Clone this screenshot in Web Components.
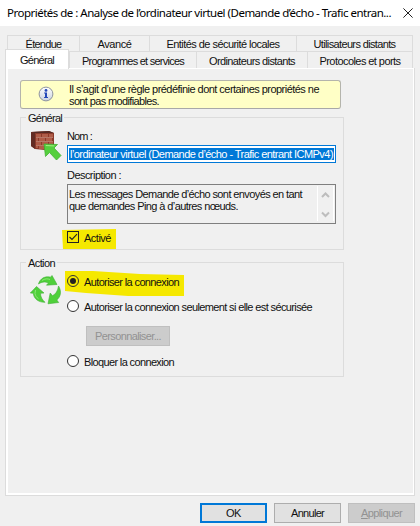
<!DOCTYPE html>
<html lang="fr">
<head>
<meta charset="utf-8">
<title>Propriétés</title>
<style>
html,body{margin:0;height:100%;overflow:hidden;background:#f0f0f0}
</style>
</head>
<body>
<rule-dialog></rule-dialog>

<template id="t-dialog">
<style>
:host{display:flex;flex-direction:column;width:420px;height:526px;background:#f0f0f0;color:#111;font:11px/12px "Liberation Sans",Arial,sans-serif}
header{display:flex;align-items:center;justify-content:space-between;height:26px;box-sizing:border-box;background:#fff;padding:0 7px 1px 7px;color:#000;font:11.5px/16px "Noto Sans","Open Sans",sans-serif}
header svg{display:block}
.tabs{margin:9px 7px 0 7px;display:grid;grid-template-rows:16px 17px;height:33px;width:406px}
.row{display:flex}
.page{box-sizing:border-box;margin-left:5px;width:410px;height:428px;border:1px solid #dcdcdc;border-top:0;display:flex}
.inner{flex:1;border:2px solid #fff;border-width:1px 1px 2px 2px;padding:11px 0 0 12px;display:flex;flex-direction:column;width:0}
.note{box-sizing:border-box;width:321px;height:29px;border:1px solid #b4b4ac;border-bottom-color:#a8a8a8;border-radius:3px;background:#ffffc6;display:flex;padding:2px 0 0 17px;gap:15px}
.note svg{margin-top:3px}
.g1{margin-top:8px;height:133px}
.g2{margin-top:12px;height:115px}
.cols{display:flex}
.c1{width:46px;box-sizing:border-box}
.c1 svg{display:block}
.c2{display:flex;flex-direction:column;align-items:flex-start}
.field{box-sizing:border-box;width:269px;height:18px;border:1px solid #0078d7;background:#fff;padding:2px 1px;margin-top:3px;display:flex}
.sel{background:#0078d7;color:#fff;height:12px;width:265px;padding-left:1px;box-sizing:border-box}
.area{box-sizing:border-box;width:269px;height:40px;border:1px solid #7f7f7f;margin-top:3px;display:flex;justify-content:space-between;padding:3px 1px 0 1px}
.sb{width:15px;height:35px;margin-top:-2px;border-left:1px solid #fff;border-right:1px solid #fff}
footer{display:flex;gap:7px;margin:7px 0 0 200px}
.mark{position:relative;z-index:0}
.mark>svg{position:absolute;z-index:-1;left:-5px;top:-3px}
</style>
<header>
  <ui-text w="384">Propriétés de : Analyse de l’ordinateur virtuel (Demande d’écho - Trafic entran...</ui-text>
  <svg width="10" height="10" viewBox="0 0 10 10"><path d="M.4.4 9.6 9.6M9.6.4.4 9.6" stroke="#222" stroke-width="1" fill="none"/></svg>
</header>
<div class="tabs">
  <div class="row">
    <ui-tab style="width:72px" w="36">Étendue</ui-tab><ui-tab style="width:70px" w="34">Avancé</ui-tab><ui-tab style="width:147px" w="113">Entités de sécurité locales</ui-tab><ui-tab style="width:117px" w="82" last>Utilisateurs distants</ui-tab>
  </div>
  <div class="row">
    <ui-tab active style="width:64px" w="34">Général</ui-tab><ui-tab style="width:127px" w="102">Programmes et services</ui-tab><ui-tab style="width:111px" w="86">Ordinateurs distants</ui-tab><ui-tab style="width:106px" w="81" last>Protocoles et ports</ui-tab>
  </div>
</div>
<div class="page"><div class="inner">
  <div class="note">
    <svg width="16" height="16" viewBox="0 0 16 16"><defs><linearGradient id="b" x2="0" y2="1"><stop stop-color="#fff"/><stop offset="1" stop-color="#c9d1df"/></linearGradient></defs><circle cx="8" cy="8" r="6.9" fill="url(#b)" stroke="#8f949e"/><circle cx="8" cy="4.4" r="1.4" fill="#2347b8"/><path d="M6.1 6.6H9v4.5h1v1H6.1v-1H7V7.600h-.9z" fill="#2347b8"/></svg>
    <div><ui-text w="250">Il s’agit d’une règle prédéfinie dont certaines propriétés ne</ui-text><ui-text w="90">sont pas modifiables.</ui-text></div>
  </div>
  <ui-group class="g1" label="Général" w="34">
    <div class="cols">
      <div class="c1" style="padding:13px 0 0 9px">
        <svg width="32" height="30" viewBox="0 0 32 30"><path d="M1 1 19 0l5 2v18L5 18 1 15z" fill="#8b3a2b"/><path d="M1 1 19 0l5 2H5z" fill="#542a24"/><path d="M1 1l4 1v16l-4-3z" fill="#632c24"/><g fill="#b05c48"><path d="M6 3h5v3H6zM12 3h6v3h-6zM19 3h4v3h-4zM6 7h2v3H6zM9 7h6v3H9zM16 7h6v3h-6zM6 11h5v3H6zM12 11h6v3h-6zM6 15h2v2H6zM9 15h5v3H9zM19 11h4v3h-4z"/></g><path d="M6 6.500h17M6 10.500h17M6 14.500h12" stroke="#d5a392" stroke-width=".6"/><path d="M14 13 27.500 13.500l-3.500 3.500 7 7.500-4.500 4.500-7-7.500-4 4z" fill="#55cf3d" stroke="#43b034" stroke-width=".8"/><path d="M15.800 14.500l8.500.4" stroke="#a3ee83" stroke-width="1" fill="none"/></svg>
      </div>
      <div class="c2" style="padding-top:12px">
        <ui-text w="25">Nom :</ui-text>
        <div class="field"><div class="sel"><ui-text w="263">l’ordinateur virtuel (Demande d’écho - Trafic entrant ICMPv4)</ui-text></div></div>
        <ui-text w="54" style="margin-top:6px">Description :</ui-text>
        <div class="area"><div><ui-text w="233">Les messages Demande d’écho sont envoyés en tant</ui-text><ui-text w="169">que demandes Ping à d’autres nœuds.</ui-text></div>
          <div class="sb"><svg width="15" height="35" viewBox="0 0 15 35"><path d="M4 11l3.500-3.500L11 11M4 26.500l3.500 3.500 3.500-3.500" fill="none" stroke="#bdbdbd" stroke-width="2"/></svg></div></div>
        <div class="mark" style="margin-top:7px">
          <svg width="56" height="22" style="top:-2px"><path d="M0 1 54 0v20H1z" fill="#f5e800"/></svg>
          <ui-choice type="check" w="27">Activé</ui-choice>
        </div>
      </div>
    </div>
  </ui-group>
  <ui-group class="g2" label="Action" w="27">
    <div class="cols">
      <div class="c1" style="padding:12px 0 0 9px">
        <svg width="32" height="30" viewBox="0 0 32 30"><g fill="#4fd03a" stroke="#3fae35" stroke-width=".6"><path d="M8.500 9C10 3.500 15 .8 20.500 2.200L22 .500l5 9-10.500.7 2-2.200C15 6.300 11.500 7 8.500 9z"/><path d="M6.500 11.500l7.500 6.500-3.500.3c0 3.500 1.700 6.500 4.500 9C8.500 27.500 3.500 23.500 3.400 18.300L.3 18z"/><path d="M28.500 11c3.500 5.500 2 11-1.700 14l1.900 2.500-10.700 1.300 2.200-10.800 2.300 2.700c3.200-1.400 5.400-5 6-9.700z"/></g><path d="M12 5.500c3-2 5.500-2 8-1M5.500 15l-.5 3.500c.6 2.500 1.500 4 3.500 5.300" fill="none" stroke="#93e87c" stroke-width=".9"/></svg>
      </div>
      <div class="c2" style="padding-top:12px">
        <div class="mark">
          <svg width="124" height="28" style="top:-4px"><path d="M3 0 31 0 78 3 122 4v21H66L24 22 3 20z" fill="#f5e800"/></svg>
          <ui-choice type="radio" checked w="95">Autoriser la connexion</ui-choice>
        </div>
        <ui-choice type="radio" w="228" style="margin-top:12px">Autoriser la connexion seulement si elle est sécurisée</ui-choice>
        <ui-button disabled w="66" style="width:84px;margin:13px 0 0 19px">Personnaliser...</ui-button>
        <ui-choice type="radio" w="90" style="margin-top:9px">Bloquer la connexion</ui-choice>
      </div>
    </div>
  </ui-group>
</div></div>
<footer><ui-button primary w="15">OK</ui-button><ui-button w="33">Annuler</ui-button><ui-button disabled key w="41">Appliquer</ui-button></footer>
</template>

<script>
const shadow=(el,html)=>{const r=el.attachShadow({mode:'open'});r.innerHTML=html;return r;};

customElements.define('rule-dialog',class extends HTMLElement{
  constructor(){super();this.attachShadow({mode:'open'}).append(document.getElementById('t-dialog').content.cloneNode(true));}
});
customElements.define('ui-tab',class extends HTMLElement{
  connectedCallback(){shadow(this,`<style>
  :host{display:flex;justify-content:center;align-items:center;box-sizing:border-box;flex:none;border:1px solid #dcdcdc;border-width:1px 0 0 1px;height:100%;padding-top:1px}
  :host([last]){border-right-width:1px}
  :host([active]){background:#fff;margin:-2px 0 0 -2px;height:20px;border-right-width:1px;z-index:1;padding-bottom:1px}
  </style><ui-text w="${this.getAttribute('w')}"><slot></slot></ui-text>`);}
});
customElements.define('ui-group',class extends HTMLElement{
  connectedCallback(){shadow(this,`<style>
  :host{display:block;position:relative;box-sizing:border-box;width:324px;border:1px solid #dcdcdc}
  .l{position:absolute;top:-6px;left:5px;background:#f0f0f0;padding:0 2px}
  </style><div class="l"><ui-text w="${this.getAttribute('w')}">${this.getAttribute('label')}</ui-text></div><slot></slot>`);}
});
customElements.define('ui-choice',class extends HTMLElement{
  connectedCallback(){
    const on=this.hasAttribute('checked');
    const icon=this.getAttribute('type')==='check'
      ?'<rect x=".5" y=".5" width="11" height="11" fill="none" stroke="#222"/><path d="M2.500 6 5 8.500 10 3.200" fill="none" stroke="#222" stroke-width="1.100"/>'
      :`<circle cx="6" cy="6" r="5.500" fill="${on?'none':'#fff'}" stroke="#333"/>${on?'<circle cx="6" cy="6" r="3" fill="#222"/>':''}`;
    shadow(this,`<style>:host{display:flex;align-items:center;gap:5px;height:13px}svg{display:block}</style>
    <svg width="12" height="13">${icon}</svg><ui-text w="${this.getAttribute('w')}"><slot></slot></ui-text>`);
  }
});
customElements.define('ui-button',class extends HTMLElement{
  connectedCallback(){shadow(this,`<style>
  :host{display:flex;align-items:center;justify-content:center;box-sizing:border-box;width:67px;height:20px;border:1px solid #adadad;background:#e1e1e1}
  :host([primary]){border:2px solid #0078d7}
  :host([disabled]){background:#ccc;border-color:#bfbfbf;color:#929292}
  :host([key]) ui-text{--first:underline}
  </style><ui-text w="${this.getAttribute('w')}"><slot></slot></ui-text>`);}
});
/* A line of text whose letter spacing is adjusted to the width in "w". */
customElements.define('ui-text',class extends HTMLElement{
  connectedCallback(){
    const r=shadow(this,`<style>:host{display:block;white-space:nowrap}span{display:inline-block;vertical-align:top}span::first-letter{text-decoration:var(--first,none)}</style><span><slot></slot></span>`);
    const s=r.querySelector('span');
    const source=this.querySelector('slot');
    const text=source?source.assignedNodes().map(n=>n.textContent).join(''):this.textContent;
    const width=s.getBoundingClientRect().width;
    s.style.letterSpacing=((+this.getAttribute('w')-width)/text.trim().length)+'px';
  }
});
</script>
</body>
</html>
